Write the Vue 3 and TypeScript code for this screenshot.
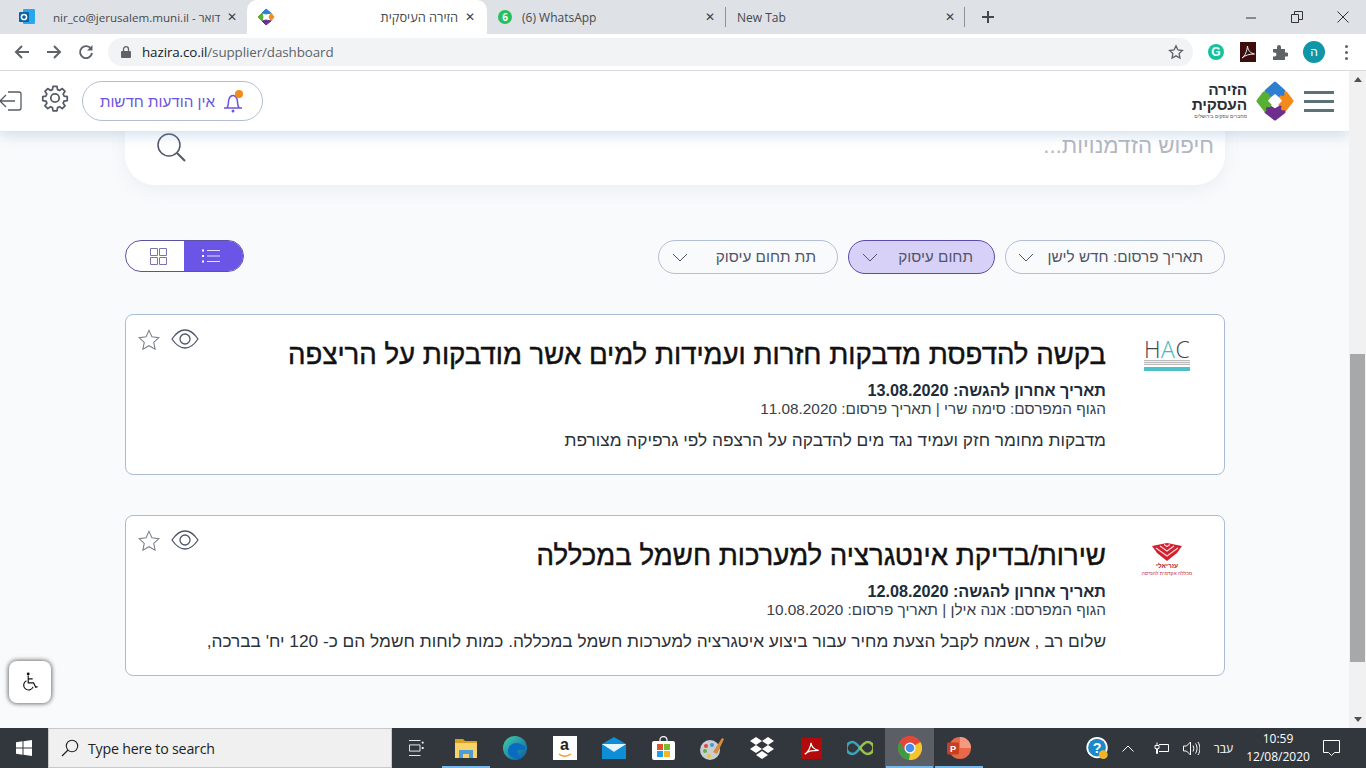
<script setup lang="ts">
interface Job {
  title: string;
  deadline: string;
  publisher: string;
  published: string;
  desc: string;
  logo: "hac" | "azrieli";
}
const jobs: Job[] = [
  {
    title: "בקשה להדפסת מדבקות חזרות ועמידות למים אשר מודבקות על הריצפה",
    deadline: "13.08.2020",
    publisher: "סימה שרי",
    published: "11.08.2020",
    desc: "מדבקות מחומר חזק ועמיד נגד מים להדבקה על הרצפה לפי גרפיקה מצורפת",
    logo: "hac",
  },
  {
    title: "שירות/בדיקת אינטגרציה למערכות חשמל במכללה",
    deadline: "12.08.2020",
    publisher: "אנה אילן",
    published: "10.08.2020",
    desc: "שלום רב , אשמח לקבל הצעת מחיר עבור ביצוע איטגרציה למערכות חשמל במכללה. כמות לוחות חשמל הם כ- 120 יח' בברכה,",
    logo: "azrieli",
  },
];
const filters = [
  { label: "תאריך פרסום: חדש לישן", cls: "f-date", active: false },
  { label: "תחום עיסוק", cls: "f-field", active: true },
  { label: "תת תחום עיסוק", cls: "f-sub", active: false },
];
</script>

<template>
  <div class="screen">
    <!-- browser tab strip -->
    <div class="tabstrip">
      <div class="tab t1">
        <svg class="fav" width="18" height="18" viewBox="0 0 18 18"><rect x="5" y="1" width="12" height="15" rx="1" fill="#28a8ea"/><rect x="1" y="4" width="10" height="10" rx="1" fill="#0a5fa8"/><circle cx="6" cy="9" r="2.6" fill="none" stroke="#fff" stroke-width="1.5"/></svg>
        <span class="tab-title">nir_co@jerusalem.muni.il - דואר</span>
        <span class="x">✕</span>
      </div>
      <div class="tab t2">
        <svg class="fav" width="18" height="18" viewBox="0 0 18 18"><path d="M9 1 14 5 9 6 5 5Z" fill="#2f7fd1" stroke="#2f7fd1"/><path d="M14 5 17 9 14 13 12 9Z" fill="#f28a1c" stroke="#f28a1c"/><path d="M14 13 9 17 5 13 9 12Z" fill="#6d2f8e" stroke="#6d2f8e"/><path d="M5 13 1 9 5 5 6 9Z" fill="#57b031" stroke="#57b031"/></svg>
        <span class="tab-title rtl-end">הזירה העיסקית</span>
        <span class="x">✕</span>
      </div>
      <div class="tab t3">
        <span class="wa">6</span>
        <span class="tab-title">(6) WhatsApp</span>
        <span class="x">✕</span>
      </div>
      <div class="sep"></div>
      <div class="tab t4">
        <span class="tab-title">New Tab</span>
        <span class="x">✕</span>
      </div>
      <div class="sep"></div>
      <svg class="plus" width="14" height="14" viewBox="0 0 14 14"><path d="M7 1v12M1 7h12" stroke="#44474b" stroke-width="2"/></svg>
      <div class="winctl">
        <svg width="12" height="12" viewBox="0 0 12 12"><path d="M1 7h10" stroke="#333" stroke-width="1"/></svg>
        <svg width="12" height="12" viewBox="0 0 12 12"><path d="M.5 3.500h7v8h-7zM3.500 3V.5h8v8H8" fill="none" stroke="#333"/></svg>
        <svg width="12" height="12" viewBox="0 0 12 12"><path d="M.5.5l11 11M11.500.5l-11 11" stroke="#333"/></svg>
      </div>
    </div>

    <!-- browser toolbar -->
    <div class="toolbar">
      <svg class="nav" width="16" height="16" viewBox="0 0 16 16"><path d="M15 8H2M8 2 2 8l6 6" fill="none" stroke="#5f6368" stroke-width="2"/></svg>
      <svg class="nav" width="16" height="16" viewBox="0 0 16 16"><path d="M1 8h13M8 2l6 6-6 6" fill="none" stroke="#5f6368" stroke-width="2"/></svg>
      <svg class="nav" width="16" height="16" viewBox="0 0 16 16"><path d="M13.200 5A6 6 0 1 0 14 9" fill="none" stroke="#5f6368" stroke-width="1.900"/><path d="M14.500 1v5.500H9Z" fill="#5f6368"/></svg>
      <div class="omni">
        <svg width="10" height="12" viewBox="0 0 10 12"><rect y="5" width="10" height="7" rx="1" fill="#5f6368"/><path d="M2.500 5V3.200a2.500 2.500 0 0 1 5 0V5" fill="none" stroke="#5f6368" stroke-width="1.300"/></svg>
        <span class="url"><b>hazira.co.il</b>/supplier/dashboard</span>
        <svg class="omni-star" width="16" height="16" viewBox="0 0 24 24"><path d="m12 2.800 2.900 6.100 6.700.9-4.900 4.600 1.200 6.700-5.900-3.300-5.900 3.300 1.200-6.700L2.400 9.800l6.700-.9Z" fill="none" stroke="#5f6368" stroke-width="2"/></svg>
      </div>
      <div class="ext">
        <span class="gram">G</span>
        <svg width="16" height="20" viewBox="0 0 16 20"><rect width="16" height="20" fill="#3d0c0c"/><path d="M2 16c3-2 5-7 5.500-12 .5 5 3 7 7 8-5 0-9 1-12.500 4Z" fill="none" stroke="#eee" stroke-width="1"/></svg>
        <svg width="16" height="16" viewBox="0 0 16 16"><path d="M1 5h4V3a2 2 0 0 1 4 0v2h4v3.500h1.500a2 2 0 0 1 0 4H13V16H1v-3.500h1.500a2 2 0 0 0 0-4H1Z" fill="#5f6368"/></svg>
        <span class="avatar">ה</span>
        <span class="dots"><i></i><i></i><i></i></span>
      </div>
    </div>

    <!-- page viewport -->
    <div class="viewport">
      <div class="page" dir="rtl">
        <header class="site-head">
          <div class="brand">
            <div class="burger"><i></i><i></i><i></i></div>
            <svg width="38" height="40" viewBox="0 0 38 40">
              <g stroke-width="3" stroke-linejoin="round">
                <path d="M10 10 19 2 28 10 24 15 19 11 14 15Z" fill="#2f7fd1" stroke="#2f7fd1"/>
                <path d="M30 12 36 20 29 29 24 24 28 20 25 16Z" fill="#f28a1c" stroke="#f28a1c"/>
                <path d="M28 31 19 38 10 31 14 26 19 29 24 26Z" fill="#6d2f8e" stroke="#6d2f8e"/>
                <path d="M8 12 2 20 9 29 14 24 10 20 13 16Z" fill="#57b031" stroke="#57b031"/>
              </g>
              <circle cx="26.500" cy="13" r="2" fill="#2f7fd1"/>
              <circle cx="11" cy="13.500" r="2" fill="#57b031"/>
              <circle cx="27" cy="27.500" r="2" fill="#f28a1c"/>
              <circle cx="12" cy="28" r="2" fill="#6d2f8e"/>
            </svg>
            <div class="brand-text">
              <strong>הזירה</strong>
              <strong>העסקית</strong>
              <small>מחברים עסקים בירושלים</small>
            </div>
          </div>
          <div class="head-tools">
            <div class="notif">
              <svg width="24" height="24" viewBox="0 0 24 24"><path d="M3 19h18M6 19c2-3 1-6 2-9 .8-2.500 2.500-3.500 4-3.500 1.500 0 3.200 1 4 3.500 1 3 0 6 2 9" fill="none" stroke="#6c55e0" stroke-width="1.500"/><circle cx="12" cy="22" r="1.500" fill="#6c55e0"/><circle cx="18" cy="5" r="4" fill="#f28a1c"/></svg>
              <span>אין הודעות חדשות</span>
            </div>
            <svg class="gear" width="28" height="28" viewBox="0 0 24 24"><path d="M10.300 2h3.400l.5 2.800 1.700.7 2.300-1.600 2.400 2.400-1.600 2.300.7 1.700 2.800.5v3.400l-2.800.5-.7 1.700 1.600 2.300-2.400 2.400-2.300-1.600-1.700.7-.5 2.800h-3.400l-.5-2.800-1.700-.7-2.300 1.600-2.400-2.400 1.600-2.300-.7-1.700-2.800-.5v-3.400l2.800-.5.7-1.700-1.600-2.300 2.400-2.400 2.300 1.600 1.700-.7Z" fill="none" stroke="#555b66" stroke-width="1.500" stroke-linejoin="round"/><circle cx="12" cy="12" r="3.600" fill="none" stroke="#555b66" stroke-width="1.500"/></svg>
            <svg class="logout" width="23" height="24" viewBox="0 0 23 24"><path d="M9 3h11a2 2 0 0 1 2 2v14a2 2 0 0 1-2 2H9" fill="none" stroke="#555b66" stroke-width="1.300"/><path d="M16 12H1M7 6l-6 6 6 6" fill="none" stroke="#555b66" stroke-width="1.300"/></svg>
          </div>
        </header>

        <div class="content">
          <div class="search">
            <span class="placeholder">חיפוש הזדמנויות...</span>
            <svg width="30" height="30" viewBox="0 0 30 30"><circle cx="13" cy="12" r="11" fill="none" stroke="#50566a" stroke-width="1.500"/><path d="m21 20 8 8" stroke="#50566a" stroke-width="2"/></svg>
          </div>

          <div class="controls">
            <div class="filters">
              <div v-for="f in filters" :key="f.label" class="filter" :class="[f.cls, { active: f.active }]">
                <span>{{ f.label }}</span>
                <svg width="16" height="9" viewBox="0 0 16 9"><path d="m1 1 7 7 7-7" fill="none" stroke="#50566a" stroke-width="1"/></svg>
              </div>
            </div>
            <div class="toggle">
              <div class="tg-btn on">
                <svg width="18" height="14" viewBox="0 0 18 14"><path d="M5 1.500h13M5 7h13M5 12.500h13" stroke="#e7e2ff" stroke-width="1.200"/><path d="M0 1.500h2M0 7h2M0 12.500h2" stroke="#fff" stroke-width="2"/></svg>
              </div>
              <div class="tg-btn off">
                <svg width="17" height="17" viewBox="0 0 17 17"><path d="M.5.5h7v7h-7zM9.500.5h7v7h-7zM.5 9.500h7v7h-7zM9.500 9.500h7v7h-7z" fill="none" stroke="#7a73b8"/></svg>
              </div>
            </div>
          </div>

          <article v-for="j in jobs" :key="j.title" class="card">
            <div class="card-logo">
              <div v-if="j.logo === 'hac'" class="hac" dir="ltr">
                <span>H<em>A</em>C</span>
                <i class="hac-sub"></i>
                <i class="hac-bar"></i>
              </div>
              <div v-else class="azr">
                <svg width="32" height="18" viewBox="0 0 32 18">
                  <path d="M1 3 16 0 31 3 26 10 16 18 6 10Z" fill="#d3202e"/>
                  <path d="M5 5 16 13 27 5M9 3 16 8 23 3M13 1.500 16 3.500 19 1.500" fill="none" stroke="#fff" stroke-width="1.100" opacity=".85"/>
                </svg>
                <strong>עזריאלי</strong>
                <small>מכללה אקדמית להנדסה</small>
              </div>
            </div>
            <div class="card-body">
              <h2>{{ j.title }}</h2>
              <p class="deadline">תאריך אחרון להגשה: {{ j.deadline }}</p>
              <p class="meta">הגוף המפרסם: {{ j.publisher }} | תאריך פרסום: {{ j.published }}</p>
              <p class="desc">{{ j.desc }}</p>
            </div>
            <div class="card-actions">
              <svg width="28" height="20" viewBox="0 0 28 20"><path d="M1 10C5 4 9 1 14 1s9 3 13 9c-4 6-8 9-13 9S5 16 1 10Z" fill="none" stroke="#50566a" stroke-width="1.300"/><circle cx="14" cy="10" r="5" fill="none" stroke="#50566a" stroke-width="1.300"/></svg>
              <svg width="22" height="21" viewBox="0 0 24 23"><path d="m12 1.500 3.200 7 7.600.9-5.600 5.200 1.500 7.500-6.700-3.800-6.700 3.800 1.500-7.500-5.600-5.200 7.600-.9Z" fill="none" stroke="#7d818c" stroke-width="1.200"/></svg>
            </div>
          </article>
        </div>

        <button class="a11y" type="button" aria-label="נגישות" dir="ltr">
          <svg width="16" height="20" viewBox="0 0 18 22"><circle cx="7" cy="2" r="1.600" fill="#111"/><path d="M7 4v8h6l2.500 5 2-.8M7 7.500h5M5 9.500a5.500 5.500 0 1 0 7.500 7" fill="none" stroke="#111" stroke-width="1.300"/></svg>
        </button>
      </div>

      <div class="scrollbar">
        <span class="arrow up"></span>
        <div class="track"><div class="thumb"></div></div>
        <span class="arrow down"></span>
      </div>
    </div>

    <!-- windows taskbar -->
    <footer class="taskbar">
      <div class="start">
        <svg width="16" height="16" viewBox="0 0 16 16"><path d="M0 2.300 6.500 1.300v6.200H0ZM7.500 1.200 16 0v7.500H7.500ZM0 8.500h6.500v6.200L0 13.700ZM7.500 8.500H16V16l-8.500-1.200Z" fill="#fff"/></svg>
      </div>
      <div class="ts-search">
        <svg width="18" height="18" viewBox="0 0 18 18"><circle cx="11" cy="7" r="5.700" fill="none" stroke="#222" stroke-width="1.100"/><path d="M7 11 1 17" stroke="#222" stroke-width="1.300"/></svg>
        <span>Type here to search</span>
      </div>
      <div class="tile">
        <svg width="15" height="16" viewBox="0 0 17 18"><path d="M0 .5h13M0 17.500h13M.5 5.500h12v7H.500z" fill="none" stroke="#fff"/><path d="M15.500 2v2M15.500 8v2" stroke="#fff" stroke-width="2"/></svg>
      </div>
      <div class="tile open">
        <svg width="22" height="19" viewBox="0 0 22 19"><path d="M0 0h8l2 2h12v4H0Z" fill="#d9a21e"/><rect y="4" width="22" height="15" fill="#f6d36b"/><rect x="4" y="11" width="14" height="8" fill="#4f9bd4"/><rect x="8" y="15" width="6" height="4" fill="#f6d36b"/></svg>
      </div>
      <div class="tile">
        <svg width="24" height="24" viewBox="0 0 24 24"><defs><linearGradient id="edge" x1="0" y1="0" x2="1" y2="1"><stop offset="0" stop-color="#3fd0a8"/><stop offset="1" stop-color="#0c59a4"/></linearGradient></defs><circle cx="12" cy="12" r="12" fill="url(#edge)"/><path d="M13 7c4 0 8 2 10 5-1 2-5 2-8 2-2 2 1 6 4 8-7 3-15-2-14-8 .5-4 4-7 8-7Z" fill="#0a6cc0"/></svg>
      </div>
      <div class="tile">
        <div class="amazon"><span>a</span><svg width="14" height="5" viewBox="0 0 14 5"><path d="M1 1c3 3 8 3 12 0" fill="none" stroke="#f29a1f" stroke-width="1.300"/></svg></div>
      </div>
      <div class="tile">
        <svg width="24" height="22" viewBox="0 0 24 22"><path d="M0 7 12 0l12 7v15H0Z" fill="#0f8ed8"/><path d="M0 7l12 8 12-8" fill="#bfe4f9"/><path d="M0 7h24L12 14Z" fill="#e8f6fe"/></svg>
      </div>
      <div class="tile">
        <svg width="23" height="24" viewBox="0 0 23 24"><path d="M8 6V4a3.500 3.500 0 0 1 7 0v2" fill="none" stroke="#eee" stroke-width="1.300"/><rect y="5" width="23" height="19" rx="2" fill="#fff"/><rect x="5" y="8" width="6" height="6" fill="#e0532f"/><rect x="12" y="8" width="6" height="6" fill="#7fba2a"/><rect x="5" y="15" width="6" height="6" fill="#1aa3e8"/><rect x="12" y="15" width="6" height="6" fill="#f5b81c"/></svg>
      </div>
      <div class="tile">
        <svg width="26" height="23" viewBox="0 0 26 23"><ellipse cx="11" cy="13" rx="10" ry="10" fill="#c9ced3"/><circle cx="7" cy="9" r="2" fill="#e0463a"/><circle cx="13" cy="8" r="2" fill="#3f9bd5"/><circle cx="6" cy="14" r="2" fill="#5eb04a"/><circle cx="10" cy="19" r="2" fill="#f2c230"/><path d="M14 15 23 1l2 1-7 15Z" fill="#d98b3c"/></svg>
      </div>
      <div class="tile">
        <svg width="24" height="22" viewBox="0 0 24 22"><path d="M6 0 12 4 6 8 0 4ZM18 0l6 4-6 4-6-4ZM6 8l6 4-6 4-6-4ZM18 8l6 4-6 4-6-4ZM12 14l6 4-6 4-6-4Z" fill="#fff"/></svg>
      </div>
      <div class="tile">
        <svg width="21" height="21" viewBox="0 0 22 22"><rect width="22" height="22" rx="1" fill="#b30b0b"/><path d="M4 17c4-3 6-7 6.500-12 .5 5 3 7 8 8-6 0-11 0-14.500 4Z" fill="none" stroke="#fff" stroke-width="1.300"/></svg>
      </div>
      <div class="tile">
        <svg width="26" height="16" viewBox="0 0 26 16"><path d="M13 8c-3-4-5-6-7.500-6a6 6 0 0 0 0 12c2.500 0 4.500-2 7.500-6Z" fill="none" stroke="#3aa7b8" stroke-width="2.500"/><path d="M13 8c3-4 5-6 7.500-6a6 6 0 0 1 0 12c-2.500 0-4.500-2-7.500-6Z" fill="none" stroke="#9ac24a" stroke-width="2.500"/></svg>
      </div>
      <div class="tile open active">
        <svg width="24" height="24" viewBox="0 0 24 24"><circle cx="12" cy="12" r="12" fill="#e0483a"/><path d="M12 12 22.400 6A12 12 0 0 1 11 24Z" fill="#f5c52c"/><path d="M12 12 11 24A12 12 0 0 1 1.600 6Z" fill="#3c9c46"/><path d="M12 6H22.400A12 12 0 0 0 1.600 6L7 15Z" fill="#e0483a"/><circle cx="12" cy="12" r="5.500" fill="#fff"/><circle cx="12" cy="12" r="4.300" fill="#4a8df0"/></svg>
      </div>
      <div class="tile open">
        <svg width="26" height="24" viewBox="0 0 26 26"><circle cx="14" cy="13" r="12" fill="#e8694a"/><path d="M14 1a12 12 0 0 1 12 12H14Z" fill="#f59a7e"/><rect x="0" y="7" width="13" height="13" rx="1.500" fill="#c4401f"/><text x="6.500" y="17.500" text-anchor="middle" class="ppt">P</text></svg>
      </div>
      <div class="tray">
        <div class="help">
          <svg width="25" height="24" viewBox="0 0 25 27"><circle cx="12" cy="13" r="12" fill="#fff"/><circle cx="12" cy="13" r="10" fill="#1b88c9"/><text x="12" y="19" text-anchor="middle" class="help-q">?</text><circle cx="19" cy="21" r="5" fill="#f0b429"/></svg>
        </div>
        <svg class="caret" width="12" height="7" viewBox="0 0 12 7"><path d="M.5 6.500 6 1l5.500 5.500" fill="none" stroke="#fff"/></svg>
        <svg class="plug" width="15" height="12" viewBox="0 0 15 12"><path d="M5 2.500h9.500v7H5M3 .500v3M1 3.500h4v3H3.500v5H2.500v-5H1Z" fill="none" stroke="#fff"/></svg>
        <svg class="vol" width="17" height="15" viewBox="0 0 17 15"><path d="M.5 5h3l4-4v13l-4-4h-3ZM10 4.500c1 2 1 4 0 6M12.500 2.500c2 3 2 7 0 10M15 1c2.500 4 2.500 9 0 13" fill="none" stroke="#fff"/></svg>
        <span class="lang">עבר</span>
        <div class="clock"><span>10:59</span><span>12/08/2020</span></div>
        <svg class="notify" width="17" height="16" viewBox="0 0 17 16"><path d="M.5.500h16v12h-5l-3 3-3-3h-5Z" fill="none" stroke="#fff"/></svg>
      </div>
    </footer>
  </div>
</template>

<style>
html, body { margin: 0; overflow: hidden; background: #f9fafb; }
</style>

<style scoped>
.screen {
  width: 1366px;
  height: 768px;
  display: flex;
  flex-direction: column;
  overflow: hidden;
  font-family: "Liberation Sans", "DejaVu Sans", sans-serif;
}

/* tab strip */
.tabstrip {
  height: 34px;
  flex: none;
  background: #dee1e6;
  display: flex;
  align-items: center;
  font-size: 12px;
  color: #45494e;
  font-family: "Open Sans", "Liberation Sans", sans-serif;
}
.tab { display: flex; align-items: center; height: 34px; box-sizing: border-box; }
.tab-title { flex: 1; white-space: nowrap; overflow: hidden; }
.x { font-size: 12px; color: #3c4043; width: 12px; text-align: center; font-family: "DejaVu Sans", sans-serif; }
.fav { flex: none; }
.t1 { width: 247px; padding: 0 9px 0 18px; }
.t1 .tab-title { margin-left: 17px; font-size: 11.600px; }
.t2 {
  width: 240px;
  padding: 0 11px 0 10px;
  background: #fff;
  border-radius: 10px 10px 0 0;
}
.rtl-end { text-align: right; margin-right: 6px; font-size: 12.800px; }
.t3 { width: 238px; padding: 0 9px 0 11px; }
.wa {
  width: 14px; height: 14px; border-radius: 50%; background: #25c05a; color: #fff;
  font-size: 10px; font-weight: 700; display: flex; align-items: center; justify-content: center;
  margin-right: 10px; flex: none;
}
.sep { width: 1px; height: 20px; background: #8f9398; flex: none; }
.t4 { width: 238px; padding: 0 8px 0 11px; }
.plus { margin-left: 16px; flex: none; }
.winctl { margin-left: auto; display: flex; gap: 34px; padding-right: 17px; align-items: center; }

/* toolbar */
.toolbar {
  height: 37px;
  flex: none;
  box-sizing: border-box;
  background: #fff;
  border-bottom: 1px solid #d7d9dc;
  display: flex;
  align-items: center;
  padding-left: 14px;
}
.nav { margin-right: 16px; flex: none; }
.nav:nth-of-type(3) { margin-right: 14px; }
.omni {
  width: 1085px;
  height: 28px;
  background: #f1f3f4;
  border-radius: 14px;
  display: flex;
  align-items: center;
  padding: 0 9px 0 13px;
  box-sizing: border-box;
  flex: none;
}
.url {
  margin-left: 11px;
  font-size: 13.400px;
  line-height: 26px;
  color: #5f6368;
  font-family: "Open Sans", "Liberation Sans", sans-serif;
  letter-spacing: -.1px;
}
.url b { font-weight: 400; color: #202124; }
.omni-star { margin-left: auto; }
.ext { display: flex; align-items: center; gap: 16px; margin-left: 15px; }
.gram {
  width: 16px; height: 16px; border-radius: 50%; background: #15c39a; color: #fff;
  font-size: 12px; font-weight: 700; display: flex; align-items: center; justify-content: center;
}
.avatar {
  width: 22px; height: 22px; border-radius: 50%; background: #0f97a7; color: #fff; font-size: 12px;
  display: flex; align-items: center; justify-content: center; margin-left: -1px; margin-right: -1px;
}
.dots { display: flex; flex-direction: column; gap: 3px; margin-left: 5px; }
.dots i { width: 3px; height: 3px; border-radius: 50%; background: #5f6368; display: block; }

/* viewport */
.viewport { flex: 1; display: flex; min-height: 0; }
.page {
  flex: 1;
  position: relative;
  background: #f9fafb;
  display: flex;
  flex-direction: column;
  overflow: hidden;
  min-width: 0;
}
.site-head {
  height: 60px;
  flex: none;
  background: #fff;
  box-shadow: 0 3px 14px rgba(130, 165, 205, .4);
  position: relative;
  z-index: 2;
  display: flex;
  align-items: center;
  justify-content: space-between;
  box-sizing: border-box;
  padding: 0 15px 0 0;
}
.brand { display: flex; align-items: center; }
.burger { width: 30px; display: flex; flex-direction: column; gap: 6px; margin-left: 10px; }
.burger i { display: block; height: 3px; background: #5d7178; }
.brand-text { display: flex; flex-direction: column; margin-right: 9px; width: 54px; color: #2c2f35; }
.brand-text strong { font-size: 15.500px; font-weight: 700; line-height: 15px; letter-spacing: -.2px; white-space: nowrap; }
.brand-text small { font-size: 5px; line-height: 7px; white-space: nowrap; margin-top: 1px; color: #555; }
.head-tools { display: flex; align-items: center; }
.notif {
  display: flex;
  align-items: center;
  gap: 6px;
  width: 181px;
  height: 40px;
  box-sizing: border-box;
  border: 1px solid #b3bed4;
  border-radius: 20px;
  padding: 0 17px 0 0;
  color: #6c55e0;
  font-size: 15.200px;
  white-space: nowrap;
}
.gear { margin-right: 13px; margin-bottom: 6px; }
.logout { margin-right: 19px; margin-left: -1px; }

.content { flex: 1; padding: 0 124px 0 125px; display: flex; flex-direction: column; min-height: 0; }
.search {
  margin-top: -26px;
  height: 80px;
  flex: none;
  background: #fff;
  border-radius: 0 0 30px 30px;
  box-shadow: 0 6px 18px rgba(170, 185, 210, .16);
  display: flex;
  align-items: flex-start;
  justify-content: space-between;
  padding: 28px 11px 0 31px;
  box-sizing: border-box;
  color: #b4b7bf;
}
.placeholder { font-size: 22.300px; margin-top: -1px; line-height: 28px; }

.controls { display: flex; justify-content: space-between; align-items: flex-start; margin-top: 55px; flex: none; }
.filters { display: flex; gap: 10px; }
.filter {
  height: 34px;
  box-sizing: border-box;
  border: 1px solid #b3bfd4;
  border-radius: 17px;
  display: flex;
  align-items: center;
  justify-content: space-between;
  padding: 0 21px 0 13px;
  font-size: 15.300px;
  color: #50566a;
  white-space: nowrap;
}
.f-date { width: 220px; padding-left: 12px; }
.f-field { width: 147px; }
.f-sub { width: 180px; }
.filter.active { background: #d8d1f7; border-color: #5b4bb0; }
.toggle {
  width: 119px;
  height: 32px;
  display: flex;
  border: 1px solid #5b52a8;
  border-radius: 16px;
  overflow: hidden;
  box-sizing: border-box;
  background: #fff;
}
.tg-btn { flex: 1; display: flex; align-items: center; justify-content: center; }
.tg-btn.on { background: #6b55e6; flex: 0 0 59px; padding-right: 5px; box-sizing: border-box; }
.tg-btn.off { padding-left: 6px; }

.card {
  height: 161px;
  flex: none;
  margin-top: 40px;
  box-sizing: border-box;
  background: #fff;
  border: 1px solid #a9bcd4;
  border-radius: 8px;
  display: flex;
}
.card-logo { width: 118px; flex: none; display: flex; justify-content: center; padding: 26px 0 0 4px; box-sizing: border-box; height: 80px; }
.hac { width: 46px; display: flex; flex-direction: column; color: #3f454b; }
.hac span { font-size: 23px; line-height: 17px; letter-spacing: .5px; text-align: center; font-family: "Open Sans", sans-serif; font-weight: 300; white-space: nowrap; }
.hac em { font-style: normal; color: #3eb8be; }
.hac-sub { height: 5px; margin-top: 2px; background: repeating-linear-gradient(180deg, #bbb 0 1px, #eee 1px 2px); }
.hac-bar { height: 4px; background: #4dc0c8; margin-top: 2px; }
.azr { width: 46px; display: flex; flex-direction: column; align-items: center; color: #c9303c; margin-top: 1px; }
.azr strong { font-size: 6.500px; line-height: 8px; margin-top: 1px; white-space: nowrap; color: #a8262f; }
.azr small { font-size: 5px; line-height: 6px; white-space: nowrap; }
.card-body { flex: 1; min-width: 0; padding-top: 23px; color: #212a33; }
.card-body h2 { margin: 0; font-size: 27.600px; line-height: 34px; font-weight: 400; color: #111; white-space: nowrap; -webkit-text-stroke: .45px #111; }
.card-body p { margin: 0; white-space: nowrap; }
.deadline { font-size: 16.200px; font-weight: 700; color: #1d2c3a; line-height: 20px; margin-top: 8px !important; }
.meta { font-size: 15.350px; color: #3a4048; line-height: 18px; }
.desc { font-size: 17.300px; color: #2c3138; line-height: 22px; margin-top: 11px !important; }
.card-actions { display: flex; gap: 11px; padding: 14px 0 0 12px; align-self: flex-start; align-items: flex-start; flex: none; }

.a11y {
  position: absolute;
  left: 9px;
  top: 590px;
  width: 42px;
  height: 42px;
  border-radius: 8px;
  border: 0;
  background: #fff;
  box-shadow: 0 0 4px 1px rgba(0, 0, 0, .55);
  display: flex;
  align-items: center;
  justify-content: center;
  padding: 0;
}

.scrollbar { width: 17px; flex: none; background: #f1f1f1; display: flex; flex-direction: column; align-items: center; }
.arrow { width: 0; height: 0; border-left: 4px solid transparent; border-right: 4px solid transparent; margin: 6px 0; flex: none; }
.arrow.up { border-bottom: 5px solid #505050; }
.arrow.down { border-top: 5px solid #505050; }
.track { flex: 1; width: 100%; padding-top: 266px; box-sizing: border-box; }
.thumb { height: 308px; margin: 0 1px; background: #a8a8a8; }

/* taskbar */
.taskbar { height: 40px; flex: none; background: #32373e; display: flex; align-items: stretch; color: #fff; }
.start { width: 48px; display: flex; align-items: center; justify-content: center; flex: none; }
.ts-search {
  width: 344px;
  flex: none;
  background: #f0f0f0;
  box-sizing: border-box;
  border: 1px solid #c8c8c8;
  display: flex;
  align-items: center;
  padding-left: 12px;
  gap: 9px;
  color: #222;
  font-size: 14.200px;
  font-family: "Open Sans", "Liberation Sans", sans-serif;
  letter-spacing: -.2px;
}
.tile { width: 49.300px; flex: none; display: flex; align-items: center; justify-content: center; box-sizing: border-box; position: relative; }
.tile.open::after { content: ""; position: absolute; left: 1px; right: 1px; bottom: 0; height: 2px; background: #76b9ed; }
.tile.active { background: #5b5f65; }
.amazon { width: 24px; height: 24px; background: #fff; display: flex; flex-direction: column; align-items: center; color: #222; }
.amazon span { font-size: 16px; line-height: 18px; font-weight: 700; }
.amazon svg { margin-top: -1px; }
.ppt { font-size: 10px; font-weight: 700; fill: #fff; font-family: "Liberation Sans", sans-serif; }
.help-q { font-size: 16px; font-weight: 700; fill: #fff; font-family: "Liberation Sans", sans-serif; }
.tray { margin-left: auto; display: flex; align-items: center; padding-right: 26px; font-family: "Open Sans", "Liberation Sans", sans-serif; }
.help { margin-right: 12px; display: flex; }
.caret { margin-right: 20px; }
.plug { margin-right: 14px; }
.vol { margin-right: 14px; }
.lang { font-size: 12px; margin-right: 15px; }
.clock { display: flex; flex-direction: column; align-items: center; font-size: 12px; margin-right: 15px; width: 60px; }
.clock span { line-height: 18px; }
</style>
